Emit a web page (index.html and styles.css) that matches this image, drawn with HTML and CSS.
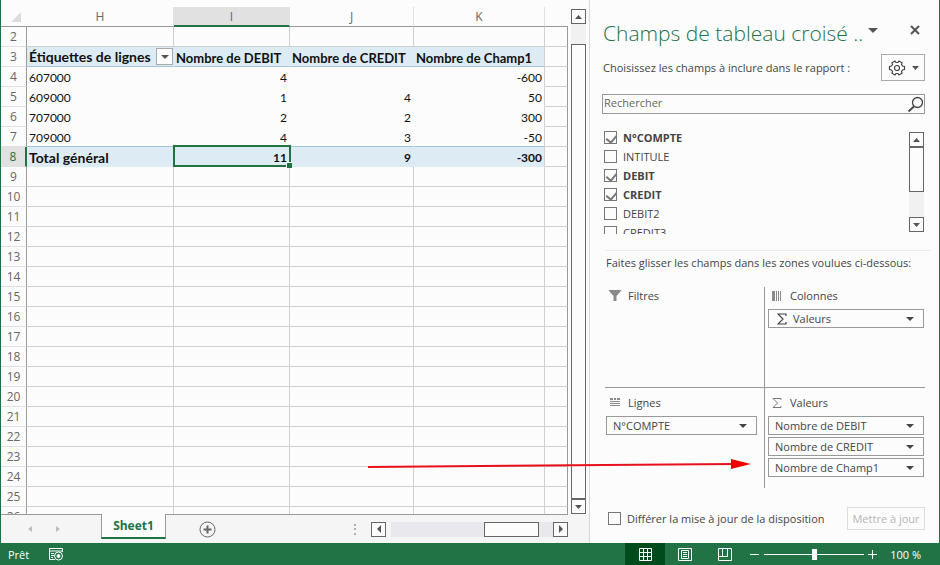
FILE: index.html
```html
<!DOCTYPE html>
<html lang="fr">
<head>
    <meta charset="UTF-8">
    <meta name="viewport" content="width=device-width, initial-scale=1.0">
    <title>Tableau croisé dynamique</title>
    <link rel="stylesheet" href="styles.css">
</head>
<body>
    <div class="app">
        <div class="main">
            <div class="sheet">
                <div class="sheet-body">
                    <div class="grid-wrap">
                        <table class="grid">
                            <colgroup>
                                <col class="col-num"><col class="col-h"><col class="col-i"><col class="col-j"><col class="col-k"><col>
                            </colgroup>
                            <thead>
                                <tr>
                                    <th class="corner"><svg width="10" height="10" viewBox="0 0 10 10"><path d="M10 0V10H0Z" fill="#dcdcdc"/></svg></th>
                                    <th>H</th><th class="active">I</th><th>J</th><th>K</th><th></th>
                                </tr>
                            </thead>
                            <tbody>
                                <tr><th>2</th><td></td><td></td><td></td><td></td><td></td></tr>
                                <tr class="pivot pivot-head">
                                    <th>3</th>
                                    <td><div class="filter-cell">Étiquettes de lignes <button class="filter" aria-label="Filtrer"><svg width="8" height="4" viewBox="0 0 8 4"><path d="M0 0H8L4 4Z"/></svg></button></div></td>
                                    <td>Nombre de DEBIT</td><td>Nombre de CREDIT</td><td>Nombre de Champ1</td><td></td>
                                </tr>
                                <tr class="pivot"><th>4</th><td>607000</td><td>4</td><td></td><td>-600</td><td></td></tr>
                                <tr class="pivot"><th>5</th><td>609000</td><td>1</td><td>4</td><td>50</td><td></td></tr>
                                <tr class="pivot"><th>6</th><td>707000</td><td>2</td><td>2</td><td>300</td><td></td></tr>
                                <tr class="pivot pivot-last"><th>7</th><td>709000</td><td>4</td><td>3</td><td>-50</td><td></td></tr>
                                <tr class="pivot pivot-total"><th class="active">8</th><td>Total général</td><td class="selected">11</td><td>9</td><td>-300</td><td></td></tr>
                                <tr><th>9</th><td></td><td></td><td></td><td></td><td></td></tr>
                                <tr><th>10</th><td></td><td></td><td></td><td></td><td></td></tr>
                                <tr><th>11</th><td></td><td></td><td></td><td></td><td></td></tr>
                                <tr><th>12</th><td></td><td></td><td></td><td></td><td></td></tr>
                                <tr><th>13</th><td></td><td></td><td></td><td></td><td></td></tr>
                                <tr><th>14</th><td></td><td></td><td></td><td></td><td></td></tr>
                                <tr><th>15</th><td></td><td></td><td></td><td></td><td></td></tr>
                                <tr><th>16</th><td></td><td></td><td></td><td></td><td></td></tr>
                                <tr><th>17</th><td></td><td></td><td></td><td></td><td></td></tr>
                                <tr><th>18</th><td></td><td></td><td></td><td></td><td></td></tr>
                                <tr><th>19</th><td></td><td></td><td></td><td></td><td></td></tr>
                                <tr><th>20</th><td></td><td></td><td></td><td></td><td></td></tr>
                                <tr><th>21</th><td></td><td></td><td></td><td></td><td></td></tr>
                                <tr><th>22</th><td></td><td></td><td></td><td></td><td></td></tr>
                                <tr><th>23</th><td></td><td></td><td></td><td></td><td></td></tr>
                                <tr><th>24</th><td></td><td></td><td></td><td></td><td></td></tr>
                                <tr><th>25</th><td></td><td></td><td></td><td></td><td></td></tr>
                                <tr><th>26</th><td></td><td></td><td></td><td></td><td></td></tr>
                            </tbody>
                        </table>
                    </div>
                    <div class="vscroll">
                        <button class="sb-btn" aria-label="Haut"><svg width="7" height="4" viewBox="0 0 7 4"><path d="M0 4H7L3.5 0Z"/></svg></button>
                        <div class="vtrack"><div class="vthumb"></div></div>
                        <button class="sb-btn" aria-label="Bas"><svg width="7" height="4" viewBox="0 0 7 4"><path d="M0 0H7L3.5 4Z"/></svg></button>
                    </div>
                </div>
                <div class="tabbar">
                    <div class="tab-nav">
                        <button aria-label="Précédent"><svg width="4" height="6" viewBox="0 0 4 6"><path d="M4 0V6L0 3Z"/></svg></button>
                        <button aria-label="Suivant"><svg width="4" height="6" viewBox="0 0 4 6"><path d="M0 0V6L4 3Z"/></svg></button>
                    </div>
                    <button class="tab">Sheet1</button>
                    <button class="tab-add" aria-label="Nouvelle feuille">
                        <svg width="17" height="17" viewBox="0 0 17 17"><circle cx="8.5" cy="8.5" r="7.5" fill="none" stroke="#666"/><path d="M8.5 4.5V12.5M4.5 8.5H12.5" stroke="#666" stroke-width="2"/></svg>
                    </button>
                    <svg class="dots" width="2" height="11" viewBox="0 0 2 11"><path d="M0 0H2V2H0ZM0 4H2V6H0ZM0 9H2V11H0Z" fill="#b0b0b0"/></svg>
                    <div class="hscroll">
                        <button class="sb-btn" aria-label="Gauche"><svg width="4" height="8" viewBox="0 0 4 8"><path d="M4 0V8L0 4Z"/></svg></button>
                        <div class="htrack"><div class="hthumb"></div></div>
                        <button class="sb-btn" aria-label="Droite"><svg width="4" height="8" viewBox="0 0 4 8"><path d="M0 0V8L4 4Z"/></svg></button>
                    </div>
                </div>
            </div>

            <aside class="pane">
                <div class="pane-title">
                    <h1>Champs de tableau croisé ..</h1>
                    <button class="plain" aria-label="Options du volet"><svg width="10" height="5" viewBox="0 0 10 5"><path d="M0 0H10L5 5Z"/></svg></button>
                    <button class="plain close" aria-label="Fermer"><svg width="10" height="10" viewBox="0 0 10 10"><path d="M1 1L9 9M9 1L1 9" stroke="#555" stroke-width="2"/></svg></button>
                </div>
                <div class="pane-intro">
                    <p>Choisissez les champs à inclure dans le rapport :</p>
                    <button class="tools" aria-label="Outils">
                        <svg width="18" height="16" viewBox="0 0 18 16"><g fill="none" stroke="#444" stroke-width="1.2"><path d="M7 1L8 2.5H10L11 1L14 2.7L13.5 4.5L14.5 6L16.5 6.5V9.5L14.5 10L13.5 11.5L14 13.3L11 15L10 13.5H8L7 15L4 13.3L4.5 11.5L3.5 10L1.5 9.5V6.5L3.5 6L4.5 4.5L4 2.7Z"/><circle cx="9" cy="8" r="2.5"/></g></svg>
                        <svg width="7" height="4" viewBox="0 0 7 4"><path d="M0 0H7L3.5 4Z"/></svg>
                    </button>
                </div>
                <div class="search">
                    <input type="text" placeholder="Rechercher" aria-label="Rechercher">
                    <svg width="17" height="17" viewBox="0 0 17 17" fill="none" stroke="#444"><circle cx="10.5" cy="6.5" r="5" stroke-width="1.3"/><path d="M7 10.5L1.5 15.5" stroke-width="1.8"/></svg>
                </div>
                <div class="fields">
                    <div class="field-list">
                        <label class="on"><input type="checkbox" checked>N°COMPTE</label>
                        <label><input type="checkbox">INTITULE</label>
                        <label class="on"><input type="checkbox" checked>DEBIT</label>
                        <label class="on"><input type="checkbox" checked>CREDIT</label>
                        <label><input type="checkbox">DEBIT2</label>
                        <label><input type="checkbox">CREDIT3</label>
                    </div>
                    <div class="field-scroll">
                        <button class="sb-btn" aria-label="Haut"><svg width="7" height="4" viewBox="0 0 7 4"><path d="M0 4H7L3.5 0Z"/></svg></button>
                        <div class="field-track"><div class="field-thumb"></div></div>
                        <button class="sb-btn" aria-label="Bas"><svg width="7" height="4" viewBox="0 0 7 4"><path d="M0 0H7L3.5 4Z"/></svg></button>
                    </div>
                </div>
                <p class="drag-hint">Faites glisser les champs dans les zones voulues ci-dessous:</p>
                <div class="zones">
                    <section class="zone">
                        <h2><svg width="12" height="12" viewBox="0 0 12 12"><path d="M0 0H12V1L7.5 6V11H4.5V6L0 1Z" fill="#8a8a8a"/></svg>Filtres</h2>
                    </section>
                    <section class="zone">
                        <h2><svg width="12" height="12" viewBox="0 0 12 12"><path d="M1 1H4V11H1ZM5 1H6V11H5ZM7 1H8V11H7ZM9 1H10V11H9Z" fill="#8a8a8a"/></svg>Colonnes</h2>
                        <div class="drop">
                            <svg class="sigma" width="10" height="12" viewBox="0 0 10 12" fill="none" stroke="#444" stroke-width="1.2"><path d="M9 3V1H1L6 6L1 11H9V9"/></svg>
                            <select aria-label="Colonnes"><option>Valeurs</option></select>
                            <svg class="caret" width="8" height="4" viewBox="0 0 8 4"><path d="M0 0H8L4 4Z"/></svg>
                        </div>
                    </section>
                    <section class="zone">
                        <h2><svg width="12" height="12" viewBox="0 0 12 12"><path d="M1 1H4V3H1ZM5 1H7V3H5ZM8 1H11V3H8ZM1 4H11V5H1ZM1 6H11V7H1ZM1 8H11V9H1Z" fill="#8a8a8a"/></svg>Lignes</h2>
                        <div class="drop">
                            <select aria-label="Lignes"><option>N°COMPTE</option></select>
                            <svg class="caret" width="8" height="4" viewBox="0 0 8 4"><path d="M0 0H8L4 4Z"/></svg>
                        </div>
                    </section>
                    <section class="zone">
                        <h2><svg width="12" height="12" viewBox="0 0 12 12" fill="none" stroke="#777"><path d="M10 3V1.5H2L6.5 6L2 10.5H10V9"/></svg>Valeurs</h2>
                        <div class="drop">
                            <select aria-label="Valeur 1"><option>Nombre de DEBIT</option></select>
                            <svg class="caret" width="8" height="4" viewBox="0 0 8 4"><path d="M0 0H8L4 4Z"/></svg>
                        </div>
                        <div class="drop">
                            <select aria-label="Valeur 2"><option>Nombre de CREDIT</option></select>
                            <svg class="caret" width="8" height="4" viewBox="0 0 8 4"><path d="M0 0H8L4 4Z"/></svg>
                        </div>
                        <div class="drop">
                            <select aria-label="Valeur 3"><option>Nombre de Champ1</option></select>
                            <svg class="caret" width="8" height="4" viewBox="0 0 8 4"><path d="M0 0H8L4 4Z"/></svg>
                        </div>
                    </section>
                </div>
                <div class="pane-footer">
                    <label><input type="checkbox">Différer la mise à jour de la disposition</label>
                    <button class="update" disabled>Mettre à jour</button>
                </div>
            </aside>
        </div>

        <footer class="status">
            <span class="ready">Prêt</span>
            <svg width="15" height="14" viewBox="0 0 15 14" fill="none" stroke="#fff"><path d="M6 12.5H0.5V1.5H13.5V5M0.5 4H13.5M2 6.5H5M2 8.5H5M2 10.5H4"/><circle cx="9.5" cy="9" r="4"/><circle cx="9.5" cy="9" r="1.5" fill="#fff"/></svg>
            <div class="views">
                <button class="current" aria-label="Normal"><svg width="13" height="13" viewBox="0 0 13 13"><path d="M0.5 0.5H12.5V12.5H0.5ZM4.5 0V13M8.5 0V13M0 4.5H13M0 8.5H13"/></svg></button>
                <button aria-label="Mise en page"><svg width="14" height="13" viewBox="0 0 14 13"><path d="M0.5 0.5H13.5V12.5H0.5ZM3.5 2.5H10.5V10.5H3.5ZM5 4.5H9M5 6.5H9M5 8.5H9"/></svg></button>
                <button aria-label="Sauts de page"><svg width="14" height="13" viewBox="0 0 14 13"><path d="M0.5 0.5H13.5V12.5H0.5ZM4.5 0V8.5M9.5 0V8.5M0 8.5H9.5"/></svg></button>
            </div>
            <div class="zoom">
                <button aria-label="Zoom arrière"><svg width="9" height="9" viewBox="0 0 9 9"><path d="M0 4.5H9"/></svg></button>
                <input type="range" min="0" max="100" value="50" aria-label="Zoom">
                <button aria-label="Zoom avant"><svg width="9" height="9" viewBox="0 0 9 9"><path d="M0 4.5H9M4.5 0V9"/></svg></button>
                <span>100 %</span>
            </div>
        </footer>

        <!-- flèche vers Nombre de Champ1 -->
        <svg class="arrow" width="383" height="12" viewBox="0 0 383 12"><path d="M0 9L366 6" stroke="#e8101c" stroke-width="2"/><path d="M363 1L383 6L363 11Z" fill="#f00000"/></svg>
    </div>
</body>
</html>
```
FILE: styles.css
```css
* { box-sizing: border-box; margin: 0; padding: 0; }
body { font-family: 'Open Sans', 'Noto Sans', Arial, sans-serif; font-size: 11px; color: #444; background: #fcfcfc; }
button, input, select { font: inherit; color: inherit; background: none; border: none; outline: none; }
button { display: flex; align-items: center; justify-content: center; }
button svg, .caret { fill: #555; }
svg { display: block; flex: none; }

.app { position: relative; display: flex; flex-direction: column; height: 100vh; min-height: 565px; overflow: hidden; border-left: 1px solid #217346; border-right: 1px solid #217346; }
.main { flex: 1; display: flex; min-height: 0; }

/* feuille */
.sheet { flex: 1; min-width: 0; display: flex; flex-direction: column; background: #f5f5f5; }
.sheet-body { flex: 1; min-height: 0; display: flex; gap: 3px; padding-right: 3px; background: #fcfcfc; }
.grid-wrap { flex: 1; min-width: 0; overflow: hidden; padding-top: 7px; }
.grid { width: 100%; table-layout: fixed; border-collapse: separate; border-spacing: 0; }
.col-num { width: 26px; }
.col-h { width: 147px; }
.col-i { width: 116px; }
.col-j { width: 124px; }
.col-k { width: 131px; }
.grid tr { height: 20px; }
.grid th { height: 20px; padding-top: 1px; font-size: 12px; line-height: 16px; font-weight: 400; color: #666; text-align: center; border-right: 1px solid #e0e0e0; border-bottom: 1px solid #e0e0e0; }
.grid thead th { border-bottom-color: #999; }
.grid thead th:last-child { border-right: none; }
.grid thead .active { background: #e1e1e1; border-bottom: 2px solid #217346; }
.grid .corner { border-right: none; padding-left: 10px; }
.grid tbody th { border-right-color: #999; }
.grid tbody .active { background: #e1e1e1; color: #217346; border-right: 2px solid #217346; }
.grid td { height: 20px; padding: 2px 2px 0; font-family: Lato, 'Open Sans', sans-serif; font-size: 12px; line-height: 16px; color: #111; text-align: right; white-space: nowrap; border-right: 1px solid #d0d0d0; border-bottom: 1px solid #d0d0d0; }
.grid td:last-child { border-right-color: #999; }
.grid td:nth-child(2) { text-align: left; }
.pivot td:nth-child(-n+4) { border-right-color: transparent; }
.pivot td:nth-child(-n+5) { border-bottom-color: transparent; }
.pivot-head td:nth-child(-n+5), .pivot-total td:nth-child(-n+5) { background: #ddebf4; font-weight: 700; }
.pivot-head td:nth-child(-n+5), .pivot-last td:nth-child(-n+5) { border-bottom-color: #a6c4dc; }
.grid .pivot-head td { font-size: 13px; }
.grid .pivot-head td:nth-child(n+3) { text-align: left; }
.grid .pivot-head td:nth-child(2) { padding-top: 0; }
.grid .pivot-head td:nth-child(2), .grid .pivot-total td:nth-child(2) { font-size: 14px; }
.filter-cell { display: flex; align-items: center; justify-content: space-between; }
.filter { width: 17px; height: 17px; margin-right: -2px; background: #fcfcfc; border: 1px solid #aaa; }
.grid .selected { position: relative; }
.selected::before { content: ''; position: absolute; inset: -2px -2px -1px -1px; border: 2px solid #217346; }
.selected::after { content: ''; position: absolute; right: -3px; bottom: -2px; width: 5px; height: 5px; background: #217346; border: 1px solid #fcfcfc; border-width: 1px 0 0 1px; }

/* barres de défilement */
.sb-btn { width: 15px; height: 15px; flex: none; background: #fcfcfc; border: 1px solid #666; }
.vscroll { display: flex; flex-direction: column; padding-top: 9px; }
.vtrack { flex: 1; display: flex; flex-direction: column; padding-top: 20px; background: #f1f1f1; }
.vthumb { flex: 1; background: #fcfcfc; border: 1px solid #666; }
.hscroll { display: flex; width: 197px; }
.htrack { flex: 1; display: flex; justify-content: flex-end; margin: 0 0 0 5px; padding-right: 14px; background: #e9e9ed; }
.hthumb { width: 55px; background: #fcfcfc; border: 1px solid #666; }

/* onglets */
.tabbar { display: flex; align-items: center; height: 29px; margin-right: 21px; border-top: 1px solid #999; }
.tab-nav { width: 100px; display: flex; align-items: center; gap: 24px; padding-left: 27px; }
.tab-nav svg { fill: #bbb; }
.tab { align-self: flex-start; width: 65px; height: 25px; margin-top: -1px; font-size: 12px; font-weight: 700; color: #217346; background: #fcfcfc; border: 1px solid #999; border-top: none; border-bottom: 2px solid #217346; }
.tab-add { width: 82px; }
.dots { margin: 0 15px 0 auto; }

/* volet */
.pane { width: 350px; flex: none; display: flex; flex-direction: column; padding: 0 14px 0 12px; border-left: 1px solid #d8d8d8; line-height: 16px; }
.pane-title { display: flex; align-items: flex-start; height: 54px; padding: 18px 5px 0 1px; }
.pane-title h1 { flex: 1; min-width: 0; font-size: 21px; line-height: 30px; font-weight: 300; color: #217346; white-space: nowrap; }
.plain { height: 24px; }
.close { margin-left: 32px; }
.pane-intro { display: flex; justify-content: space-between; align-items: center; height: 27px; padding-left: 1px; }
.tools { width: 44px; height: 27px; gap: 6px; border: 1px solid #aaa; }
.search { display: flex; align-items: center; height: 20px; margin-top: 13px; border: 1px solid #999; }
.search input { flex: 1; min-width: 0; padding: 0 0 2px 1px; }
.search input::placeholder { color: #666; opacity: 1; }
.fields { display: flex; justify-content: space-between; height: 106px; margin-top: 14px; padding-right: 1px; }
.field-list { flex: 1; overflow: hidden; }
.fields label { display: flex; align-items: center; gap: 6px; height: 19px; padding-left: 2px; }
.fields .on { font-weight: 700; }
input[type="checkbox"] { appearance: none; flex: none; width: 13px; height: 13px; position: relative; background: #fcfcfc; border: 1px solid #777; }
input[type="checkbox"]:checked::after { content: ''; position: absolute; left: 3px; top: 1px; width: 5px; height: 8px; border: solid #777; border-width: 0 2px 2px 0; transform: rotate(40deg); }
.field-scroll { display: flex; flex-direction: column; padding: 4px 0 2px; }
.field-track { flex: 1; background: #f1f1f1; }
.field-thumb { height: 45px; background: #fcfcfc; border: 1px solid #666; }
.drag-hint { height: 37px; margin: 16px -6px 0 3px; padding: 4px 0 0 1px; border-top: 1px solid #ececec; white-space: nowrap; }
.zones { display: grid; grid-template-columns: 159px 1fr; grid-template-rows: 101px 100px; margin-left: 3px; }
.zone { display: flex; flex-direction: column; gap: 2px; padding: 0 7px 0 1px; }
.zone:nth-child(even) { padding: 0 1px 0 3px; border-left: 1px solid #999; }
.zone:nth-child(-n+2) { border-bottom: 1px solid #999; }
.zone h2 { display: flex; align-items: center; gap: 7px; height: 20px; padding: 0 0 2px 3px; font-size: 11px; font-weight: 400; }
.zone:nth-child(n+3) h2 { height: 26px; padding-top: 5px; }
.drop { display: flex; align-items: center; height: 19px; padding: 0 9px 0 6px; border: 1px solid #999; }
.drop select { flex: 1; min-width: 0; appearance: none; line-height: 16px; }
.sigma { margin: 0 6px 0 2px; }
.caret { fill: #444; }
.pane-footer { display: flex; align-items: center; justify-content: space-between; height: 23px; margin-top: 19px; padding-left: 6px; }
.pane-footer label { display: flex; align-items: center; gap: 6px; white-space: nowrap; }
.update { width: 78px; height: 23px; color: #b5b5b5; border: 1px solid #ddd; white-space: nowrap; }

/* barre d'état */
.status { display: flex; align-items: center; height: 22px; padding: 0 19px 0 7px; color: #fff; background: #217346; margin-right: -1px; }
.status button svg { fill: none; stroke: #fff; }
.ready { margin-right: 20px; }
.views { display: flex; align-self: stretch; margin-left: auto; }
.views button { width: 40px; }
.views .current { background: #004b1c; }
.zoom { display: flex; align-items: center; margin-left: 5px; }
.zoom input { appearance: none; width: 100px; height: 12px; margin: 0 4px 0 5px; background: linear-gradient(#fff, #fff) center / 100% 1px no-repeat; }
.zoom input::-webkit-slider-thumb { appearance: none; width: 5px; height: 11px; background: #fff; }
.zoom span { margin-left: 13px; }

.arrow { position: absolute; right: 188px; top: 458px; }
```
